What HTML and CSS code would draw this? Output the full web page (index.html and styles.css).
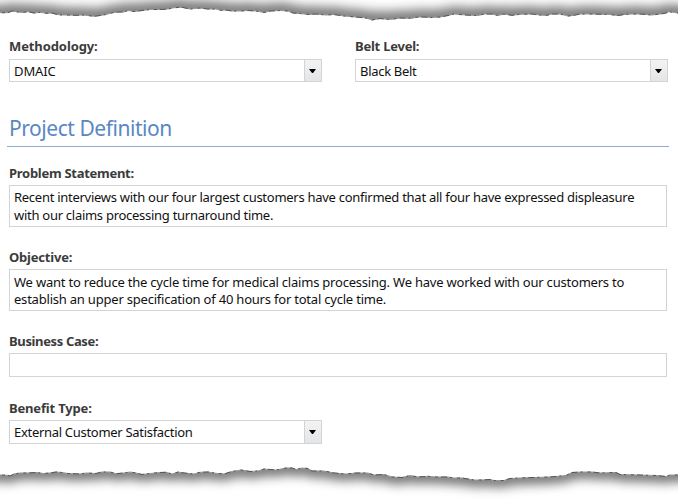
FILE: index.html
```html
<!DOCTYPE html>
<html lang="en">
<head>
<meta charset="utf-8">
<title>Project Definition</title>
<link rel="stylesheet" href="styles.css">
</head>
<body>
<svg class="tear" viewBox="0 0 678 30" aria-hidden="true">
  <defs>
    <filter id="soft" x="-40" y="-40" width="760" height="110" filterUnits="userSpaceOnUse" color-interpolation-filters="sRGB"><feGaussianBlur stdDeviation="6"/></filter>
    <path id="top-line" d="M-20 13L0 12.7 8 12.7 12 11 18 12 22 12.5 28 11.7 34 13 40 12.3 46 13.3 52 13 57 14.5 62 15 68 15 76 15.3 82 15 88 15.5 94 16.3 100 15.5 106 14.5 112 12.8 118 12 124 12 128 10.5 134 11.5 142 10.5 150 9.5 160 9.5 168 9 174 7.7 182 7.3 190 9 200 8 208 9 216 9 221 10.3 226 10 232 11 240 11 248 10.5 256 11 264 12.5 270 11 280 10.5 288 11 293 13 300 13.5 308 14.5 316 14 326 15 334 14.5 344 16 356 17 366 18 372 20 380 18.5 390 19.5 400 18 412 18.3 418 17 424 17 432 17.5 440 17 448 15.5 454 14 460 14.5 466 15 478 15.5 484 14 492 14 498 15.5 504 14 512 15.3 520 14.3 532 14 540 15 546 15.5 552 14 560 14 568 16 574 15.3 580 14 592 14 610 14.5 618 15.5 624 14.5 632 14 640 14 652 15 660 14 666 13 669 11.7 678 13 698 13"/>
    <clipPath id="top-clip"><path d="M-20 -10V13L0 12.7 8 12.7 12 11 18 12 22 12.5 28 11.7 34 13 40 12.3 46 13.3 52 13 57 14.5 62 15 68 15 76 15.3 82 15 88 15.5 94 16.3 100 15.5 106 14.5 112 12.8 118 12 124 12 128 10.5 134 11.5 142 10.5 150 9.5 160 9.5 168 9 174 7.7 182 7.3 190 9 200 8 208 9 216 9 221 10.3 226 10 232 11 240 11 248 10.5 256 11 264 12.5 270 11 280 10.5 288 11 293 13 300 13.5 308 14.5 316 14 326 15 334 14.5 344 16 356 17 366 18 372 20 380 18.5 390 19.5 400 18 412 18.3 418 17 424 17 432 17.5 440 17 448 15.5 454 14 460 14.5 466 15 478 15.5 484 14 492 14 498 15.5 504 14 512 15.3 520 14.3 532 14 540 15 546 15.5 552 14 560 14 568 16 574 15.3 580 14 592 14 610 14.5 618 15.5 624 14.5 632 14 640 14 652 15 660 14 666 13 669 11.7 678 13 698 13V-10Z"/></clipPath>
  </defs>
  <g clip-path="url(#top-clip)"><use href="#top-line" class="shade"/></g>
  <use href="#top-line" class="rim"/><use href="#top-line" class="flecks"/>
</svg>

<main class="form">
  <div class="row">
    <div class="field">
      <div class="label"><span class="t-method">Methodology:</span></div>
      <div class="select"><span class="value t-dmaic">DMAIC</span><span class="arrow"><svg viewBox="0 0 7 4"><path d="M0 0H7L4 4H3Z"/></svg></span></div>
    </div>
    <div class="field">
      <div class="label"><span class="t-belt">Belt Level:</span></div>
      <div class="select"><span class="value t-black">Black Belt</span><span class="arrow"><svg viewBox="0 0 7 4"><path d="M0 0H7L4 4H3Z"/></svg></span></div>
    </div>
  </div>
  <h1 class="heading"><span class="t-head">Project Definition</span></h1>
  <div class="field problem">
    <div class="label"><span class="t-problem">Problem Statement:</span></div>
    <div class="area"><div class="t-p1">Recent interviews with our four largest customers have confirmed that all four have expressed displeasure</div><div class="t-p2">with our claims processing turnaround time.</div></div>
  </div>
  <div class="field objective">
    <div class="label"><span class="t-obj">Objective:</span></div>
    <div class="area"><div class="t-o1">We want to reduce the cycle time for medical claims processing. We have worked with our customers to</div><div class="t-o2">establish an upper specification of 40 hours for total cycle time.</div></div>
  </div>
  <div class="field business">
    <div class="label"><span class="t-biz">Business Case:</span></div>
    <div class="input"></div>
  </div>
  <div class="field benefit">
    <div class="label"><span class="t-ben">Benefit Type:</span></div>
    <div class="select"><span class="value t-ext">External Customer Satisfaction</span><span class="arrow"><svg viewBox="0 0 7 4"><path d="M0 0H7L4 4H3Z"/></svg></span></div>
  </div>
</main>

<svg class="tear" viewBox="0 460 678 40" aria-hidden="true">
  <defs>
    <filter id="soft-low" x="-40" y="430" width="760" height="110" filterUnits="userSpaceOnUse" color-interpolation-filters="sRGB"><feGaussianBlur stdDeviation="5.5"/></filter>
    <path id="low-line" d="M-20 475L0 475 8 475.3 10 476 14 474 20 473 28 473 36 472.5 44 473.5 50 473 56 472 62 472.5 68 473.5 80 474 86 473 96 473.5 102 472 110 472 116 473.7 124 473 130 472 136 473 142 474.5 150 473.5 160 472.5 166 472.3 172 474 178 472 184 473 194 474 200 472.3 208 472 216 473.3 224 474 232 471.5 241 470 250 471.5 258 471 264 469 276 470 286 468 292 468 296 469.5 302 468 308 468.5 312 471 324 471 334 473 346 474 356 473 368 473 374 475 384 474.5 392 477 402 477.5 410 475.5 418 477 428 476.3 436 477 448 477 454 478 462 478 474 480 482 480 490 479.5 494 480.5 504 480.5 510 478.5 520 478 534 477.5 550 477 566 475.5 572 472.5 582 472 592 472 600 473 616 472.5 620 474.5 638 475 656 475.5 666 476.5 670 475 678 475 698 475"/>
    <clipPath id="low-clip"><path d="M-20 510V475L0 475 8 475.3 10 476 14 474 20 473 28 473 36 472.5 44 473.5 50 473 56 472 62 472.5 68 473.5 80 474 86 473 96 473.5 102 472 110 472 116 473.7 124 473 130 472 136 473 142 474.5 150 473.5 160 472.5 166 472.3 172 474 178 472 184 473 194 474 200 472.3 208 472 216 473.3 224 474 232 471.5 241 470 250 471.5 258 471 264 469 276 470 286 468 292 468 296 469.5 302 468 308 468.5 312 471 324 471 334 473 346 474 356 473 368 473 374 475 384 474.5 392 477 402 477.5 410 475.5 418 477 428 476.3 436 477 448 477 454 478 462 478 474 480 482 480 490 479.5 494 480.5 504 480.5 510 478.5 520 478 534 477.5 550 477 566 475.5 572 472.5 582 472 592 472 600 473 616 472.5 620 474.5 638 475 656 475.5 666 476.5 670 475 678 475 698 475V510Z"/></clipPath>
  </defs>
  <g clip-path="url(#low-clip)"><use href="#low-line" class="shade low"/></g>
  <use href="#low-line" class="rim"/><use href="#low-line" class="flecks"/>
</svg>
</body>
</html>
```
FILE: styles.css
```css
* { box-sizing: border-box; }
body {
  margin: 0;
  width: 678px;
  height: 500px;
  overflow: hidden;
  display: flex;
  flex-direction: column;
  background: #fff;
  color: #111;
  font: 13px/18px "Noto Sans", "Open Sans", sans-serif;
}
.tear { display: block; width: 678px; flex: none; fill: none; }
.shade { stroke: #6b6b6b; stroke-width: 14; filter: url(#soft); }
.shade.low { stroke-width: 13; filter: url(#soft-low); }
.rim { stroke: #999; stroke-width: 1; }
.flecks { stroke: #555; stroke-width: 1; stroke-dasharray: 3 3 6 3 2 5; }

.form { flex: none; height: 430px; padding: 7px 10px 0 9px; }
.row { display: flex; gap: 33px; }
.row .field, .benefit { width: 313px; }
.label { height: 21px; line-height: 19px; font-weight: 700; color: #3b3b3b; white-space: nowrap; }
.row .label { height: 22px; }
.value, .heading span { white-space: nowrap; }
.select { display: flex; height: 23px; border: 1px solid #d4d4d4; background: #fff; }
.value { flex: 1; padding-left: 4px; line-height: 23px; }
.arrow {
  display: flex;
  align-items: center;
  justify-content: center;
  width: 17px;
  padding-right: 1px;
  border-left: 1px solid #d4d4d4;
  background: linear-gradient(#f3f3f3, #e4e5e7);
}
.arrow svg { width: 7px; height: 4px; }
.heading {
  height: 40px;
  margin: 25px -1px 0 -2px;
  padding-left: 2px;
  border-bottom: 1px solid #8cabd8;
  color: #5888c4;
  font-size: 21px;
  font-weight: 400;
  line-height: 42px;
}
.problem, .objective, .business { width: 658px; }
.problem { margin-top: 17px; }
.objective, .business { margin-top: 21px; }
.benefit { margin-top: 22px; }
.area { height: 42px; padding: 2px 4px; border: 1px solid #d4d4d4; white-space: nowrap; }
.objective .area { padding-top: 4px; line-height: 17px; }
.area div { width: max-content; }
.input { height: 24px; border: 1px solid #d4d4d4; }
.benefit .select { height: 24px; }

/* tracking per text run */
.t-method { letter-spacing: -0.1px; }
.t-belt { letter-spacing: -0.23px; }
.t-dmaic { letter-spacing: -0.1px; }
.t-black, .t-ext { letter-spacing: -0.3px; }
.t-head { letter-spacing: -0.45px; }
.t-problem { letter-spacing: -0.28px; }
.t-p1, .t-p2 { letter-spacing: -0.275px; }
.t-obj { letter-spacing: -0.2px; }
.t-o1, .t-o2 { letter-spacing: -0.21px; }
.t-biz { letter-spacing: -0.36px; }
.t-ben { letter-spacing: -0.17px; }
```
